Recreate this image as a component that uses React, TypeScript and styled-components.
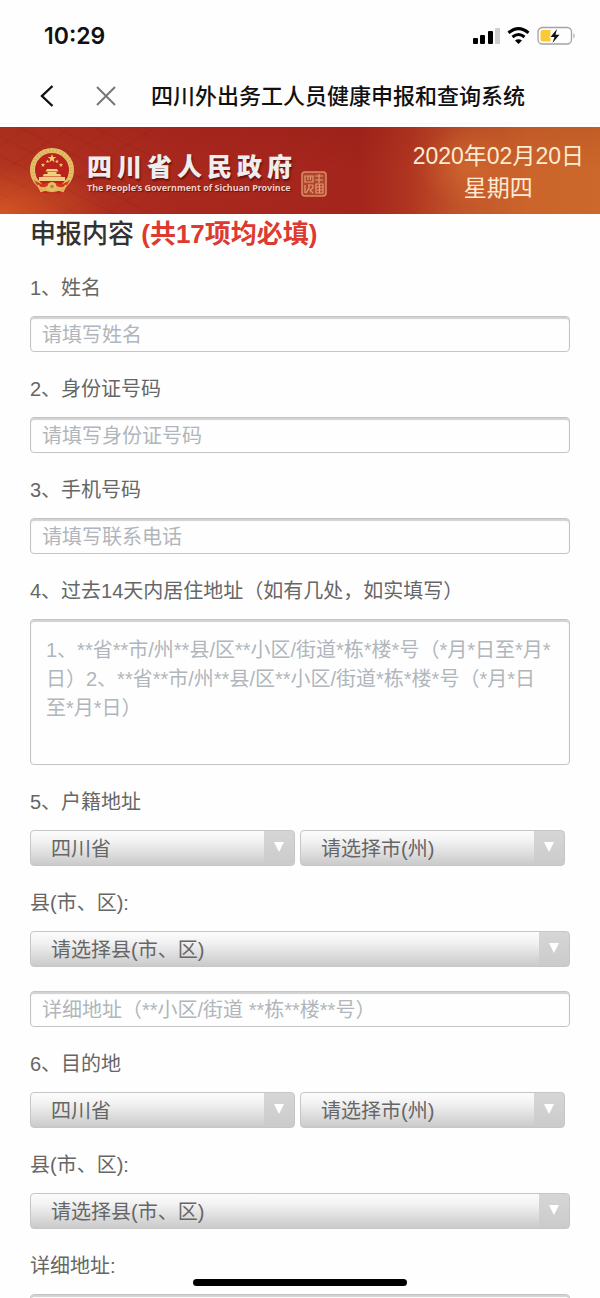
import React from "react";
import styled, { createGlobalStyle } from "styled-components";

const GlobalStyle = createGlobalStyle`
  *, *::before, *::after { box-sizing: border-box; }
  body {
    margin: 0;
    background: #fefefe;
    color: #666;
    font: 20px/26px "Liberation Sans", "Noto Sans CJK SC", sans-serif;
  }
  button, input, select, textarea { font: inherit; color: inherit; margin: 0; }
`;

const Screen = styled.div`
  height: 100vh;
  display: flex;
  flex-direction: column;
`;

const StatusBar = styled.div`
  flex: none;
  display: flex;
  align-items: center;
  justify-content: space-between;
  height: 72px;
  padding: 0 24px 0 44px;
`;

const Clock = styled.time`
  font: 600 23px/28px Inter, sans-serif;
  color: #111;
`;

const StatusIcons = styled.svg`
  display: block;
`;

const NavBar = styled.header`
  flex: none;
  display: flex;
  align-items: center;
  height: 52px;
  padding-left: 35px;
  margin-bottom: 3px;
  padding-bottom: 4px;
  border-bottom: 1px solid #f8f8f8;
`;

const NavButton = styled.button`
  display: flex;
  align-items: center;
  justify-content: center;
  width: 24px;
  height: 32px;
  padding: 0;
  border: 0;
  background: none;
`;

const NavTitle = styled.h1`
  margin: 0 0 0 33px;
  padding-top: 2px;
  font-size: 22px;
  line-height: 32px;
  font-weight: 500;
  color: #111;
  white-space: nowrap;
`;

const CloseButton = styled(NavButton)`
  margin-left: 35px;
`;

const Page = styled.main`
  flex: 1;
  min-height: 0;
  overflow-y: auto;
  scrollbar-width: none;
`;

const Banner = styled.section`
  display: flex;
  align-items: center;
  justify-content: space-between;
  height: 87px;
  padding: 0 16px 0 29px;
  background:
    radial-gradient(ellipse 110px 50px at 0 100%, rgba(224, 100, 38, 0.7), transparent),
    repeating-linear-gradient(27deg, rgba(110, 10, 10, 0.07) 0 2px, transparent 2px 17px) left / 150px 100% no-repeat,
    repeating-linear-gradient(-33deg, rgba(110, 10, 10, 0.06) 0 2px, transparent 2px 23px) left / 150px 100% no-repeat,
    radial-gradient(ellipse 50px 40px at 78% 45%, rgba(222, 122, 52, 0.4), transparent),
    linear-gradient(180deg, rgba(120, 10, 10, 0.12), transparent 50%),
    linear-gradient(90deg, #b23420 0%, #a9281e 30%, #a3251c 60%, #b03520 68%, #c2552a 77%, #cb652b 88%, #cc682b 100%);
`;

const Brand = styled.div`
  display: flex;
  align-items: center;
`;

const BrandText = styled.div`
  margin-left: 12px;
  padding-top: 6px;
`;

const BrandName = styled.div`
  font: 900 25px/28px "Noto Sans CJK SC", sans-serif;
  letter-spacing: 5px;
  color: #eee;
  text-shadow: 1px 2px 2px rgba(60, 0, 0, 0.6);
  white-space: nowrap;
`;

const BrandEnglish = styled.div`
  font: 700 9px/18px "Noto Sans", sans-serif;
  color: #f0cfc8;
  text-shadow: 1px 1px 1px rgba(60, 0, 0, 0.6);
  white-space: nowrap;
`;

const Seal = styled.svg`
  align-self: flex-end;
  margin-left: 4px;
`;

const Today = styled.time`
  padding-top: 2px;
  font-size: 23px;
  line-height: 32px;
  color: #fdebd3;
  text-align: center;
  white-space: nowrap;
`;

const Form = styled.form`
  display: flex;
  flex-direction: column;
  gap: 24px;
  padding: 0 30px 40px;
`;

const FormTitle = styled.h2`
  margin: 0;
  padding-top: 3px;
  font-size: 26px;
  line-height: 34px;
  font-weight: 500;
  color: #333;
`;

const Required = styled.strong`
  font-weight: 700;
  color: #dd3a30;
`;

const FieldBox = styled.div`
  display: flex;
  flex-direction: column;
  gap: 15px;
`;

const Label = styled.label`
  display: block;
`;

const TextInput = styled.input`
  width: 100%;
  height: 36px;
  padding: 2px 11px 0;
  border: 1px solid #c4c4c4;
  border-radius: 4px;
  background: #fefefe;
  box-shadow: inset 0 2px 1px #d2d2d2;
  outline: 0;
  &::placeholder { color: #b0b6bc; opacity: 1; }
`;

const TextArea = styled.textarea`
  display: block;
  width: 100%;
  height: 146px;
  padding: 16px 15px;
  border: 1px solid #c4c4c4;
  border-radius: 4px;
  background: #fefefe;
  box-shadow: inset 0 2px 1px #d2d2d2;
  line-height: 29px;
  resize: none;
  outline: 0;
  &::placeholder { color: #b0b6bc; opacity: 1; }
`;

const SelectPair = styled.div`
  display: grid;
  grid-template-columns: 1fr 1fr;
  gap: 5px;
  padding-right: 5px;
`;

const SelectWrap = styled.div`
  position: relative;
`;

const SelectBox = styled.select`
  display: block;
  appearance: none;
  width: 100%;
  height: 36px;
  padding: 2px 34px 0 20px;
  border: 1px solid #c6c6c6;
  border-radius: 4px;
  background:
    linear-gradient(#d6d6d6, #cbcbcb) right / 30px 100% no-repeat,
    linear-gradient(#fcfcfc, #f2f2f2 30%, #cacaca);
  outline: 0;
`;

const SelectArrow = styled.svg`
  position: absolute;
  right: 11px;
  top: 12px;
  pointer-events: none;
`;

const HomeIndicator = styled.div`
  position: fixed;
  left: 50%;
  bottom: 12px;
  width: 214px;
  height: 7px;
  margin-left: -107px;
  border-radius: 4px;
  background: #000;
`;

type FieldProps = { id: string; label?: string; children: React.ReactNode };

function Field({ id, label, children }: FieldProps) {
  return (
    <FieldBox>
      {label && <Label htmlFor={id}>{label}</Label>}
      {children}
    </FieldBox>
  );
}

function Select({ id, option, name }: { id: string; option: string; name?: string }) {
  return (
    <SelectWrap>
      <SelectBox id={id} aria-label={name}>
        <option>{option}</option>
      </SelectBox>
      <SelectArrow width="10" height="10" viewBox="0 0 10 10" aria-hidden="true">
        <path d="M0 0H10L5 10Z" fill="#fff" />
      </SelectArrow>
    </SelectWrap>
  );
}

function star(cx: number, cy: number, r: number) {
  return Array.from({ length: 10 }, (_, i) => {
    const a = (Math.PI * i) / 5 - Math.PI / 2;
    const q = i % 2 ? r * 0.4 : r;
    return `${cx + q * Math.cos(a)},${cy + q * Math.sin(a)}`;
  }).join(" ");
}

function Emblem() {
  return (
    <svg width="46" height="48" viewBox="0 0 46 48" role="img" aria-label="国徽">
      <path d="M8 36L10 45L18 47L23 43L28 47L36 45L38 36Z" fill="#c2281d" />
      <circle cx="23" cy="23" r="19.5" fill="#b9251c" stroke="#e4c069" strokeWidth="5" />
      <circle cx="23" cy="23" r="19.5" fill="none" stroke="#b98635" strokeWidth="3" strokeDasharray="1 2.4" opacity=".4" />
      <polygon points={star(23, 11.5, 4.5)} fill="#f4d36d" />
      <polygon points={star(14, 18, 2.3)} fill="#f4d36d" />
      <polygon points={star(18.5, 14.5, 2)} fill="#f4d36d" />
      <polygon points={star(28, 14.5, 2)} fill="#f4d36d" />
      <polygon points={star(32, 18, 2.3)} fill="#f4d36d" />
      <path d="M18 22H28L29.500 24.500H16.500ZM18.500 25H27.500V27H18.500ZM15 27H31L32.500 29.500H13.500ZM10 30H36V34H10Z" fill="#f0d080" />
      <path d="M5 33Q14 39 17 36H29Q32 39 41 33L38 38Q32 42 28 39H18Q14 42 8 38Z" fill="#d5331f" />
      <circle cx="23" cy="39.500" r="4.500" fill="#e4c069" />
      <circle cx="23" cy="39.500" r="1.800" fill="#b98635" />
      <path d="M9 38L12 44L19 42M37 38L34 44L27 42" fill="none" stroke="#e4b65a" strokeWidth="2" />
    </svg>
  );
}

export default function App() {
  return (
    <>
      <GlobalStyle />
      <Screen>
        <StatusBar>
          <Clock>10:29</Clock>
          <StatusIcons width="103" height="20" viewBox="0 0 103 20" aria-hidden="true">
            <g fill="#000">
              <rect x="0" y="12" width="5" height="6" rx="1" />
              <rect x="7" y="9" width="5" height="9" rx="1" />
              <rect x="15" y="5" width="5" height="13" rx="1" />
              <rect x="22" y="2" width="5" height="16" rx="1" fill="#cfcfcf" />
            </g>
            <g fill="none" stroke="#000" strokeWidth="3">
              <path d="M35.500 6.800Q45.500 -1.600 55.500 6.800" />
              <path d="M39.500 11Q45.500 6 51.500 11" />
            </g>
            <path d="M42 14.500Q45.500 12 49 14.500L45.500 18Z" fill="#000" />
            <rect x="65" y="1.500" width="33.500" height="16.500" rx="4.500" fill="#fefefe" stroke="#a2a2a2" strokeWidth="1.300" />
            <path d="M70 4H77.500V15.500H70Q67.500 15.500 67.500 13V6.500Q67.500 4 70 4Z" fill="#fbc936" />
            <path d="M100.500 7Q103 9.800 100.500 12.600Z" fill="#a2a2a2" />
            <path d="M84 3L77.500 11H81.500L79.500 17L86.500 8.700H82.500Z" fill="#111" stroke="#fefefe" strokeWidth="1.600" paintOrder="stroke" />
          </StatusIcons>
        </StatusBar>

        <NavBar>
          <NavButton type="button" aria-label="返回">
            <svg width="14" height="24" viewBox="0 0 14 24">
              <path d="M12.500 2L2 12L12.500 22" fill="none" stroke="#111" strokeWidth="2.400" />
            </svg>
          </NavButton>
          <CloseButton type="button" aria-label="关闭">
            <svg width="20" height="20" viewBox="0 0 20 20">
              <path d="M1 1L19 19M19 1L1 19" stroke="#777" strokeWidth="2" />
            </svg>
          </CloseButton>
          <NavTitle>四川外出务工人员健康申报和查询系统</NavTitle>
        </NavBar>

        <Page>
          <Banner>
            <Brand>
              <Emblem />
              <BrandText>
                <BrandName>四川省人民政府</BrandName>
                <BrandEnglish>The People’s Government of Sichuan Province</BrandEnglish>
              </BrandText>
              <Seal width="26" height="26" viewBox="0 0 26 26" aria-hidden="true">
                <rect x="1" y="1" width="24" height="24" rx="3" fill="#b0442d" stroke="#dc8a64" strokeWidth="1.500" />
                <path
                  d="M4 5H12V11H4ZM7 5V9M9.500 5V9M4 14V22M7 14H12M8 14V17L5 22M12 14V17L9 19L12 22M14 5H22M14 9H22M18 3V12M15 13H22V22H15ZM15 16H22M18.500 13V22M16 19H21"
                  fill="none"
                  stroke="#e09a74"
                  strokeWidth="1.200"
                />
              </Seal>
            </Brand>
            <Today dateTime="2020-02-20">
              2020年02月20日
              <br />
              星期四
            </Today>
          </Banner>

          <Form>
            <FormTitle>
              申报内容 <Required>(共17项均必填)</Required>
            </FormTitle>
            <Field id="name" label="1、姓名">
              <TextInput id="name" placeholder="请填写姓名" />
            </Field>
            <Field id="id-number" label="2、身份证号码">
              <TextInput id="id-number" placeholder="请填写身份证号码" />
            </Field>
            <Field id="phone" label="3、手机号码">
              <TextInput id="phone" type="tel" placeholder="请填写联系电话" />
            </Field>
            <Field id="stay" label="4、过去14天内居住地址（如有几处，如实填写）">
              <TextArea
                id="stay"
                placeholder="1、**省**市/州**县/区**小区/街道*栋*楼*号（*月*日至*月*日）2、**省**市/州**县/区**小区/街道*栋*楼*号（*月*日至*月*日）"
              />
            </Field>
            <Field id="home-province" label="5、户籍地址">
              <SelectPair>
                <Select id="home-province" option="四川省" />
                <Select id="home-city" name="市(州)" option="请选择市(州)" />
              </SelectPair>
            </Field>
            <Field id="home-county" label="县(市、区):">
              <Select id="home-county" option="请选择县(市、区)" />
            </Field>
            <Field id="home-detail">
              <TextInput id="home-detail" aria-label="详细地址" placeholder="详细地址（**小区/街道 **栋**楼**号）" />
            </Field>
            <Field id="target-province" label="6、目的地">
              <SelectPair>
                <Select id="target-province" option="四川省" />
                <Select id="target-city" name="市(州)" option="请选择市(州)" />
              </SelectPair>
            </Field>
            <Field id="target-county" label="县(市、区):">
              <Select id="target-county" option="请选择县(市、区)" />
            </Field>
            <Field id="target-detail" label="详细地址:">
              <TextInput id="target-detail" />
            </Field>
          </Form>
        </Page>
      </Screen>
      <HomeIndicator />
    </>
  );
}
